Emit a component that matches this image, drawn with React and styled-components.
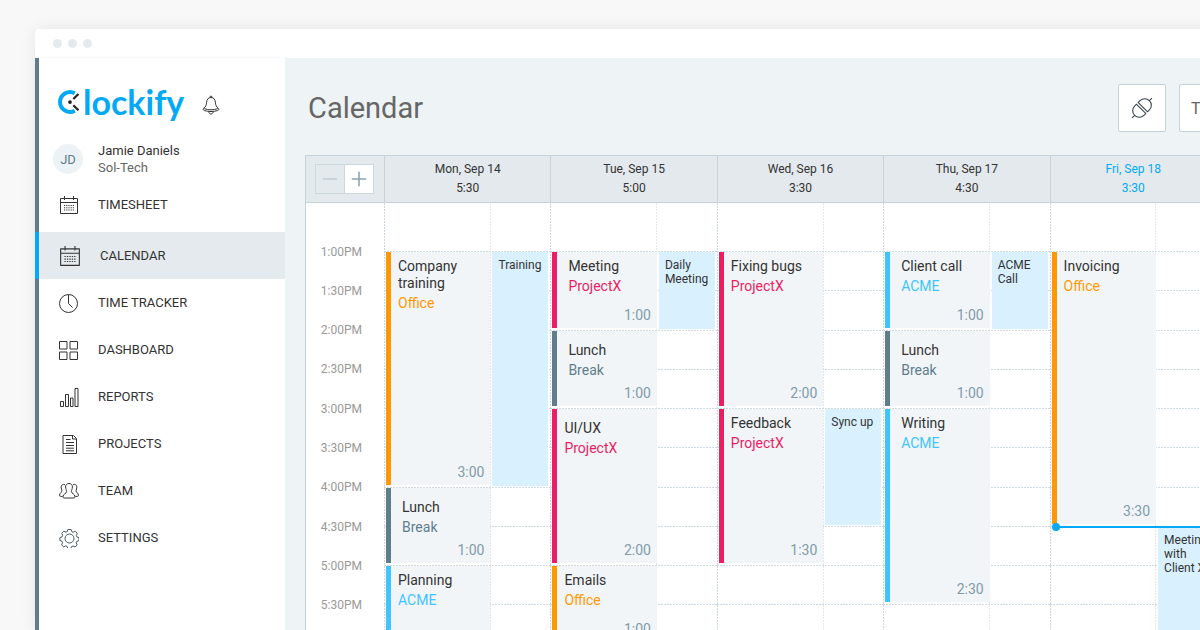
import React from "react";
import styled, { createGlobalStyle, css } from "styled-components";

const GlobalStyle = createGlobalStyle`
  * {
    box-sizing: border-box;
  }

  body {
    margin: 0;
    background: #f8f8f8;
    color: #333;
    font-family: Roboto, "Liberation Sans", sans-serif;
  }

  button {
    font-family: inherit;
    cursor: pointer;
  }
`;

const Page = styled.div`
  display: flex;
  height: 100vh;
  padding: 29px 0 0 35px;
  overflow: hidden;
`;

const Window = styled.div`
  display: flex;
  flex-direction: column;
  flex: 1;
  margin-right: -41px;
  background: #fff;
  border-radius: 4px 0 0 0;
  box-shadow: 0 0 16px rgba(0, 0, 0, 0.08);
`;

const TitleBar = styled.div`
  display: flex;
  flex: none;
  align-items: center;
  gap: 6px;
  height: 29px;
  padding-left: 18px;
`;

const Dot = styled.span`
  width: 9px;
  height: 9px;
  border-radius: 50%;
  background: #e4eaf0;
`;

const Layout = styled.div`
  display: flex;
  flex: 1;
`;

const Sidebar = styled.aside`
  flex: none;
  width: 250px;
  border-left: 4px solid #607d8b;
  background: #fff;
  box-shadow: 1px 0 2px rgba(96, 125, 139, 0.12);
`;

const Brand = styled.div`
  display: flex;
  align-items: center;
  gap: 17px;
  height: 40px;
  margin-top: 24px;
  padding-left: 19px;
`;

const Logo = styled.a`
  display: flex;
  align-items: center;
  gap: 1px;
  color: #03a9f4;
  font-family: Lato, sans-serif;
  font-size: 34px;
  font-weight: 700;
  line-height: 40px;
  text-decoration: none;
`;

const IconButton = styled.button`
  display: flex;
  padding: 6px 0 0;
  border: 0;
  background: none;
  color: #333;
`;

const Profile = styled.div`
  display: flex;
  align-items: center;
  gap: 15px;
  margin-top: 20px;
  padding-left: 14px;
`;

const Avatar = styled.div`
  display: flex;
  align-items: center;
  justify-content: center;
  width: 30px;
  height: 30px;
  border-radius: 50%;
  background: #ecf2f6;
  color: #607d8b;
  font-size: 13px;
`;

const UserName = styled.div`
  font-size: 13px;
  line-height: 17px;
`;

const Workspace = styled.div`
  color: #666;
  font-size: 13px;
  line-height: 17px;
`;

const Nav = styled.nav`
  margin-top: 5px;
`;

const NavItem = styled.a`
  display: flex;
  align-items: center;
  gap: 19px;
  height: 47px;
  padding-left: 20px;
  color: #333;
  font-size: 13px;
  text-decoration: none;

  svg {
    flex: none;
    width: 20px;
    height: 20px;
  }

  ${({ $active }) =>
    $active &&
    css`
      margin: 4px 0 0 -4px;
      border-left: 4px solid #03a9f4;
      background: #e4eaee;

      svg {
        width: 22px;
        height: 22px;
      }
    `}
`;

const Main = styled.main`
  flex: 1;
  min-width: 0;
  padding: 26px 0 0 20px;
  background: #eef3f6;
`;

const Toolbar = styled.header`
  display: flex;
  align-items: center;
  gap: 13px;
  margin-bottom: 23px;
`;

const Title = styled.h1`
  flex: 1;
  margin: 0;
  padding-left: 3px;
  color: #666;
  font-size: 29px;
  font-weight: 400;
  line-height: 36px;
`;

const ToolButton = styled.button`
  display: flex;
  align-items: center;
  justify-content: center;
  width: 48px;
  height: 48px;
  padding: 0;
  border: 1px solid #c6d2d9;
  border-radius: 2px;
  background: #fff;
  color: #666;
  font-size: 16px;
`;

const ToolMenuButton = styled(ToolButton)`
  justify-content: flex-start;
  width: 62px;
  padding-left: 11px;
`;

const Calendar = styled.section`
  margin-right: 24px;
  border: 1px solid #c6d2d9;
  background: #fff;
`;

const HeaderRow = styled.div`
  display: grid;
  grid-template-columns: 78px repeat(5, 1fr);
  height: 47px;
  border-bottom: 1px solid #c6d2d9;
  background: #e4e9ed;
`;

const ZoomCell = styled.div`
  display: flex;
  align-items: center;
  padding-left: 9px;
`;

const ZoomButton = styled.button`
  display: flex;
  align-items: center;
  justify-content: center;
  width: 30px;
  height: 30px;
  padding: 0;
  border: 1px solid #cdd8dd;
  background: #fff;
  color: #90a4ae;

  &:disabled {
    width: 29px;
    border-right: 0;
    background: #e4e9ed;
    color: #c3d0d6;
  }
`;

const DayHeader = styled.div`
  padding-top: 4px;
  border-left: 1px solid #c6d2d9;
  color: ${({ $today }) => ($today ? "#03a9f4" : "#333")};
  font-size: 12px;
  line-height: 19px;
  text-align: center;
`;

const Body = styled.div`
  display: grid;
  grid-template-columns: 78px repeat(5, 1fr);
  height: 480px;
`;

const Times = styled.div`
  display: grid;
  grid-template-rows: 29px repeat(11, 1fr) 19px;
  align-items: center;
  padding-right: 22px;
  color: #999;
  font-size: 12px;
  text-align: right;
`;

const Time = styled.span`
  grid-row: ${({ $slot }) => $slot + 2};
`;

const Day = styled.div`
  display: grid;
  grid-template-columns: 64% 1fr;
  grid-template-rows: 48px repeat(11, 1fr);
  background:
    repeating-linear-gradient(#ccd8df 0 2px, transparent 2px 3px) 0 0 / 1px 100% no-repeat,
    repeating-linear-gradient(#e2e9ed 0 2px, transparent 2px 3px) 64% 0 / 1px 100% no-repeat;
`;

const Slot = styled.div`
  grid-column: 1 / -1;
  grid-row: ${({ $slot }) => $slot + 2};
  background: repeating-linear-gradient(90deg, #d0dbe1 0 2px, transparent 2px 3px) 0 0 / 100% 1px
    no-repeat;
`;

const Entry = styled.article`
  display: flex;
  flex-direction: column;
  grid-column: 1;
  grid-row: ${({ $from, $to }) => `${$from + 2} / ${$to + 2}`};
  margin: 1px 0 2px 2px;
  padding: ${({ $low }) => ($low ? 11 : 6)}px 6px 4px ${({ $inset }) => ($inset ? 11 : 7)}px;
  border-left: 5px solid ${({ $color }) => $color};
  background: #f2f5f8;
  font-size: 14px;
  line-height: 17px;
`;

const EntryProject = styled.div`
  margin-top: 3px;
  color: ${({ $color }) => $color};
`;

const Duration = styled.div`
  margin-top: auto;
  color: #7f9bab;
  text-align: right;
`;

const Meeting = styled.article`
  grid-column: 2;
  grid-row: ${({ $from, $to }) => `${$from + 2} / ${$to + 2}`};
  margin: 1px 2px 1px 2px;
  padding: 6px 0 0 6px;
  background: #d9f0ff;
  font-size: 12px;
  line-height: 14px;
`;

const NowLine = styled.div`
  position: relative;
  z-index: 1;
  grid-column: 1 / -1;
  grid-row: ${({ $slot }) => $slot + 2};
  height: 2px;
  margin-left: 5px;
  background: #03a9f4;

  &::before {
    content: "";
    position: absolute;
    top: -3px;
    left: -3px;
    width: 8px;
    height: 8px;
    border-radius: 50%;
    background: #03a9f4;
  }
`;

const PROJECTS = {
  Office: "#ff9800",
  ProjectX: "#e91e63",
  Break: "#607d8b",
  ACME: "#40c4ff",
};

const TIMES = [
  "1:00PM", "1:30PM", "2:00PM", "2:30PM", "3:00PM",
  "3:30PM", "4:00PM", "4:30PM", "5:00PM", "5:30PM",
];

// from / to are half-hour slots counted from 1:00PM
const DAYS = [
  {
    name: "Mon, Sep 14",
    total: "5:30",
    entries: [
      { title: "Company training", project: "Office", from: 0, to: 6, time: "3:00" },
      { title: "Lunch", project: "Break", from: 6, to: 8, time: "1:00", inset: true, low: true },
      { title: "Planning", project: "ACME", from: 8, to: 11, time: "1:30" },
    ],
    meetings: [{ title: "Training", from: 0, to: 6 }],
  },
  {
    name: "Tue, Sep 15",
    total: "5:00",
    entries: [
      { title: "Meeting", project: "ProjectX", from: 0, to: 2, time: "1:00", inset: true },
      { title: "Lunch", project: "Break", from: 2, to: 4, time: "1:00", inset: true, low: true },
      { title: "UI/UX", project: "ProjectX", from: 4, to: 8, time: "2:00", low: true },
      { title: "Emails", project: "Office", from: 8, to: 10, time: "1:00" },
    ],
    meetings: [{ title: "Daily Meeting", from: 0, to: 2 }],
  },
  {
    name: "Wed, Sep 16",
    total: "3:30",
    entries: [
      { title: "Fixing bugs", project: "ProjectX", from: 0, to: 4, time: "2:00" },
      { title: "Feedback", project: "ProjectX", from: 4, to: 8, time: "1:30" },
    ],
    meetings: [{ title: "Sync up", from: 4, to: 7 }],
  },
  {
    name: "Thu, Sep 17",
    total: "4:30",
    entries: [
      { title: "Client call", project: "ACME", from: 0, to: 2, time: "1:00", inset: true },
      { title: "Lunch", project: "Break", from: 2, to: 4, time: "1:00", inset: true, low: true },
      { title: "Writing", project: "ACME", from: 4, to: 9, time: "2:30", inset: true },
    ],
    meetings: [{ title: "ACME Call", from: 0, to: 2 }],
  },
  {
    name: "Fri, Sep 18",
    total: "3:30",
    today: true,
    now: 7,
    entries: [{ title: "Invoicing", project: "Office", from: 0, to: 7, time: "3:30" }],
    meetings: [{ title: "Meeting with Client X", from: 7, to: 10 }],
  },
];

const Icon = ({ children, size = 20 }) => (
  <svg
    width={size}
    height={size}
    viewBox="0 0 20 20"
    fill="none"
    stroke="currentColor"
    strokeLinejoin="round"
    aria-hidden="true"
  >
    {children}
  </svg>
);

const CalendarIcon = () => (
  <Icon>
    <path d="M1.5 3.5h17v15h-17zM1.5 7.5h17M5.5 1v4M14.5 1v4" />
    <path d="M5 10.5h11M5 12.8h11M5 15h11" strokeDasharray="1.2 1" />
  </Icon>
);

const ClockIcon = () => (
  <Icon>
    <circle cx="9.5" cy="10.5" r="9" />
    <path d="M9.5 2v8.5l4 4" />
  </Icon>
);

const DashboardIcon = () => (
  <Icon>
    <path d="M.5 1.5h7.5v7.5h-7.5zM11 1.5h7.5v7.5h-7.5zM.5 12h7.5v7.5h-7.5zM11 12h7.5v7.5h-7.5z" />
  </Icon>
);

const ReportsIcon = () => (
  <Icon>
    <path d="M1.5 14.5h3v5h-3zM6.5 7.5h3v12h-3zM11.5 11h2.5v8.5h-2.5zM16 1.5h3v18h-3z" />
  </Icon>
);

const ProjectsIcon = () => (
  <Icon>
    <path d="M4 1.5h10.5l3 3v15h-13.5zM13.5 1.5v3.5h4M7 5.5h4.5M7 8.5h8M7 11.5h8M7 14.2h8M7 16.8h8" />
  </Icon>
);

const TeamIcon = () => (
  <Icon>
    <path d="M10 2.5c-2.3 0-3.5 1.5-3.4 3.5.1 2.4 1 3 1 4.6 0 2-3.6 2.2-3.6 5.2 0 1 .4 1.2 1.2 1.2h9.6c.8 0 1.2-.3 1.2-1.2 0-3-3.6-3.2-3.6-5.2 0-1.6.9-2.2 1-4.6.1-2-1.1-3.5-3.4-3.5z" />
    <path d="M6 3.8c-2-1-4 .2-3.9 2.3 0 1.7.8 2.3.8 3.7 0 1.7-2.2 2-2.3 4.4 0 .8.3 1.2 1 1.2h2M14 3.8c2-1 4 .2 3.9 2.3 0 1.7-.8 2.3-.8 3.7 0 1.7 2.2 2 2.3 4.4 0 .8-.3 1.2-1 1.2h-2" />
  </Icon>
);

const SettingsIcon = () => (
  <Icon>
    <circle cx="10.5" cy="10.5" r="4.5" stroke="#455a64" />
    <path
      d="M8.9 1.5h3.2l.7 2.2 1.3.6 2.2-1 2 2-1 2.2.5 1.3 2.2.9v2.9l-2.2.8-.6 1.4 1 2.1-2 2.1-2.2-1-1.3.5-.8 2.1h-2.9l-.9-2.1-1.3-.6-2.2 1-2-2 1-2.2-.5-1.3-2.2-.8v-3l2.2-.8.6-1.4-1-2.1 2-2.1 2.2 1 1.3-.5z"
      stroke="#455a64"
    />
  </Icon>
);

const BellIcon = () => (
  <Icon>
    <path d="M10 2.5c-2.7 0-4.2 2-4.4 4.8-.2 3-.9 4.6-3 6-.9.7-.5 1.8.7 2.2 4.2 1.4 9.2 1.4 13.4 0 1.2-.4 1.6-1.5.7-2.2-2.1-1.4-2.8-3-3-6-.2-2.8-1.7-4.8-4.4-4.8z" />
    <path d="M8.8 2.5c0-1.9 2.4-1.9 2.4 0M3.2 13.6c4 1.6 9.6 1.6 13.6 0M7.8 17c.5 2.6 3.9 2.6 4.4 0" />
  </Icon>
);

const PlugIcon = () => (
  <Icon size={22}>
    <g transform="rotate(-45 10 10)" stroke="#37474f">
      <path d="M8.9 3.5v13M8.9 4h-2.4a6 6 0 0 0 0 12h2.4M.5 10h-3.3" />
      <path d="M11.1 3.5v13M11.1 4h2.4a6 6 0 0 1 0 12h-2.4M19.5 10h3.3" />
    </g>
  </Icon>
);

const LogoMark = () => (
  <svg width="24" height="26" viewBox="0 0 24 26" fill="none" aria-hidden="true">
    <path d="M16.8 4.2a10 10 0 1 0 0 17.6" stroke="#03a9f4" strokeWidth="4" />
    <path d="M20.5 5l-5.2 5M20.5 21.3l-5.2-5" stroke="#222" strokeWidth="2.2" />
    <circle cx="12" cy="13.1" r="1.9" fill="#222" />
  </svg>
);

const NAV = [
  { label: "TIMESHEET", icon: CalendarIcon },
  { label: "CALENDAR", icon: CalendarIcon, active: true },
  { label: "TIME TRACKER", icon: ClockIcon },
  { label: "DASHBOARD", icon: DashboardIcon },
  { label: "REPORTS", icon: ReportsIcon },
  { label: "PROJECTS", icon: ProjectsIcon },
  { label: "TEAM", icon: TeamIcon },
  { label: "SETTINGS", icon: SettingsIcon },
];

const DayColumn = ({ day }) => (
  <Day>
    {TIMES.map((time, slot) => (
      <Slot key={time} $slot={slot} />
    ))}
    {day.entries.map((entry) => (
      <Entry
        key={entry.from}
        $from={entry.from}
        $to={entry.to}
        $inset={entry.inset}
        $low={entry.low}
        $color={PROJECTS[entry.project]}
      >
        <div>{entry.title}</div>
        <EntryProject $color={PROJECTS[entry.project]}>{entry.project}</EntryProject>
        <Duration>{entry.time}</Duration>
      </Entry>
    ))}
    {day.meetings.map((meeting) => (
      <Meeting key={meeting.title} $from={meeting.from} $to={meeting.to}>
        {meeting.title}
      </Meeting>
    ))}
    {day.now && <NowLine $slot={day.now} />}
  </Day>
);

const App = () => {
  return (
    <Page>
      <GlobalStyle />
      <Window>
        <TitleBar>
          <Dot />
          <Dot />
          <Dot />
        </TitleBar>

        <Layout>
          <Sidebar>
            <Brand>
              <Logo href="#" aria-label="Clockify">
                <LogoMark />
                lockify
              </Logo>
              <IconButton aria-label="Notifications">
                <BellIcon />
              </IconButton>
            </Brand>

            <Profile>
              <Avatar>JD</Avatar>
              <div>
                <UserName>Jamie Daniels</UserName>
                <Workspace>Sol-Tech</Workspace>
              </div>
            </Profile>

            <Nav>
              {NAV.map(({ label, icon: NavIcon, active }) => (
                <NavItem key={label} href="#" $active={active}>
                  <NavIcon />
                  {label}
                </NavItem>
              ))}
            </Nav>
          </Sidebar>

          <Main>
            <Toolbar>
              <Title>Calendar</Title>
              <ToolButton aria-label="Integrations">
                <PlugIcon />
              </ToolButton>
              <ToolMenuButton>T</ToolMenuButton>
            </Toolbar>

            <Calendar>
              <HeaderRow>
                <ZoomCell>
                  <ZoomButton aria-label="Zoom out" disabled>
                    <Icon size={16}>
                      <path d="M1 10h18" strokeWidth="2" />
                    </Icon>
                  </ZoomButton>
                  <ZoomButton aria-label="Zoom in">
                    <Icon size={16}>
                      <path d="M1 10h18M10 1v18" strokeWidth="2" />
                    </Icon>
                  </ZoomButton>
                </ZoomCell>
                {DAYS.map((day) => (
                  <DayHeader key={day.name} $today={day.today}>
                    <div>{day.name}</div>
                    <div>{day.total}</div>
                  </DayHeader>
                ))}
              </HeaderRow>

              <Body>
                <Times>
                  {TIMES.map((time, slot) => (
                    <Time key={time} $slot={slot}>
                      {time}
                    </Time>
                  ))}
                </Times>
                {DAYS.map((day) => (
                  <DayColumn key={day.name} day={day} />
                ))}
              </Body>
            </Calendar>
          </Main>
        </Layout>
      </Window>
    </Page>
  );
};

export default App;
